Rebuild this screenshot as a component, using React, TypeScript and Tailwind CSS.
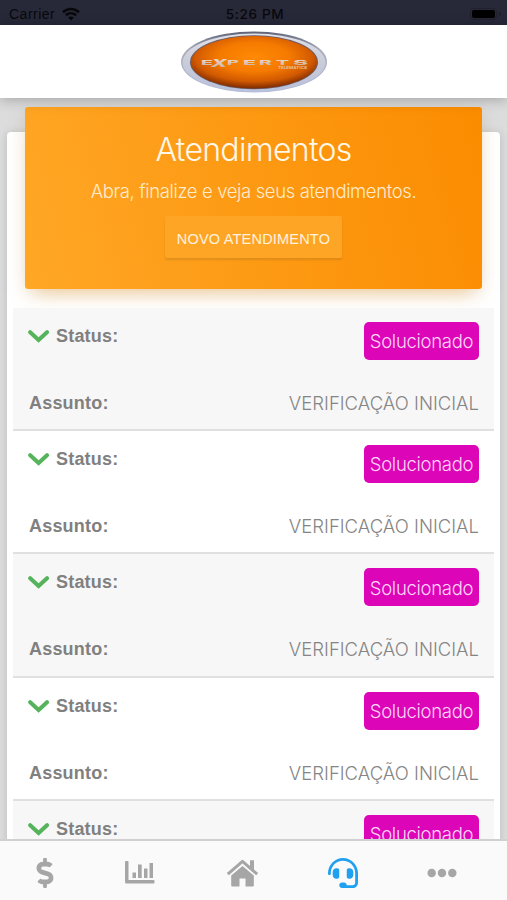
import React from "react";
import { FaDollarSign, FaHeadset, FaEllipsisH } from "react-icons/fa";

function StatusBar() {
  return (
    <div className="flex h-[25px] shrink-0 items-center justify-between bg-[#272838] pl-[9px] pr-[6px] text-[14px] text-[#08080c]">
      <div className="flex w-40 items-center gap-[7px] pt-[3px]">
        <span className="tracking-[0.5px]">Carrier</span>
        <svg width="18" height="14" viewBox="0 0 18 14" fill="none" stroke="#08080c" strokeWidth="2.6">
          <path d="M1 5.3C5.6.8 12.4.8 17 5.3M3.9 8.3c3-2.8 7.2-2.8 10.2 0" />
          <path d="M9 13.5 6.1 10.6c1.8-1.5 4-1.5 5.8 0Z" fill="#08080c" stroke="none" />
        </svg>
      </div>
      <span className="pt-[3px] font-['Inter'] text-[13.5px] font-medium tracking-[0.7px]">5:26 PM</span>
      <div className="flex w-40 items-center justify-end gap-[2px] pt-[2px]">
        <div className="h-[12px] w-[27px] rounded-[4px] border border-[#20202e] p-px">
          <div className="h-full rounded-[2px] bg-black" />
        </div>
        <div className="h-1 w-[2px] rounded-r bg-[#20202e]" />
      </div>
    </div>
  );
}

function Logo() {
  return (
    <svg width="148" height="64" viewBox="0 0 148 64">
      <defs>
        <linearGradient id="rim" x1="0" y1="0" x2="0" y2="1">
          <stop offset="0" stopColor="#5f6377" />
          <stop offset=".3" stopColor="#a8abb9" />
          <stop offset="1" stopColor="#b5bdd8" />
        </linearGradient>
        <linearGradient id="band" x1="0" y1="0" x2="0" y2="1">
          <stop offset="0" stopColor="#dfe1ea" />
          <stop offset=".5" stopColor="#c9ccd9" />
          <stop offset="1" stopColor="#b9c1dc" />
        </linearGradient>
        <radialGradient id="face" cx=".5" cy=".4" r=".62">
          <stop offset="0" stopColor="#ff8a05" />
          <stop offset=".45" stopColor="#f57a00" />
          <stop offset=".75" stopColor="#d25a00" />
          <stop offset="1" stopColor="#722400" />
        </radialGradient>
        <linearGradient id="metal" x1="0" y1="0" x2="0" y2="1">
          <stop offset="0" stopColor="#f0dfd2" />
          <stop offset="1" stopColor="#c8ab98" />
        </linearGradient>
      </defs>
      <ellipse cx="74" cy="32" rx="73" ry="30.5" fill="url(#rim)" />
      <ellipse cx="74" cy="32.5" rx="71.5" ry="29" fill="url(#band)" />
      <ellipse cx="74" cy="32.2" rx="64" ry="27" fill="#6c5b62" />
      <ellipse cx="74" cy="32.2" rx="63" ry="26.2" fill="url(#face)" />
      <g fontFamily="Inter, sans-serif" fontWeight="800" fontSize="6.5" fill="url(#metal)">
        <text x="21" y="34.500" textLength="12" lengthAdjust="spacingAndGlyphs">E</text>
        <text x="31" y="37" fontSize="11" fontStyle="italic" textLength="16" lengthAdjust="spacingAndGlyphs">X</text>
        <text x="47" y="34.500" textLength="12" lengthAdjust="spacingAndGlyphs">P</text>
        <text x="63" y="34.500" textLength="13" lengthAdjust="spacingAndGlyphs">E</text>
        <text x="79" y="34.500" textLength="13" lengthAdjust="spacingAndGlyphs">R</text>
        <text x="96" y="34.500" textLength="13" lengthAdjust="spacingAndGlyphs">T</text>
        <text x="113" y="34.500" textLength="15" lengthAdjust="spacingAndGlyphs">S</text>
      </g>
      <text x="98" y="39" fontSize="4" fontFamily="Inter, sans-serif" fontWeight="700" fill="#e5bf9f" textLength="29" lengthAdjust="spacingAndGlyphs">TELEMATICS</text>
    </svg>
  );
}

function ChartIcon() {
  return (
    <svg width="30" height="23" viewBox="0 0 30 23" fill="currentColor">
      <path d="M0 1Q0 0 1 0h1.500q1 0 1 1v18h25q1 0 1 1v1.500q0 1-1 1H1.500Q0 22.500 0 21Z" />
      <path d="M7.500 11.500H11V17H7.500zM13 3.500h3.700V17H13zM19 7.500h3.500V17H19zM24.500 2H28v15h-3.500z" />
    </svg>
  );
}

function HomeIcon() {
  return (
    <svg width="33" height="28" viewBox="0 0 33 28" fill="currentColor">
      <path d="M16.500 7 27.800 16.500v10q0 1-1 1H19.500v-8h-6v8H6.200q-1 0-1-1v-10Z" />
      <path d="M24 1.500h4V11l-4-3.500Z" />
      <path d="m1.800 15.500 14.700-12.800 14.700 12.800" fill="none" stroke="#fafafa" strokeWidth="5" strokeLinejoin="round" />
      <path d="M24 1.500h4V12l-4-3.500Z" />
      <path d="m1.800 15.200 14.700-12.800 14.700 12.800" fill="none" stroke="currentColor" strokeWidth="3" strokeLinejoin="round" />
    </svg>
  );
}

function Ticket({ shaded }: { shaded: boolean }) {
  return (
    <div className={`h-[123.3px] border-b-2 border-[#e0e0e0] px-[15px] pt-[14px] ${shaded ? "bg-[#f7f7f7]" : "bg-white"}`}>
      <div className="flex items-start justify-between">
        <div className="flex items-center gap-[6px] pt-px">
          <svg width="22" height="14" viewBox="0 0 22 14" fill="none" stroke="#55b35b" strokeWidth="4" strokeLinecap="round" strokeLinejoin="miter">
            <path d="M2.200 3.200 10.600 11 19 3.200" />
          </svg>
          <span className="text-[18px] font-bold leading-[26px] tracking-[0.2px] text-[#808080]">Status:</span>
        </div>
        <span className="flex h-[38px] w-[115px] items-center justify-center rounded-[5px] bg-[#dc05b8] pt-[2px] font-['Inter'] text-[18.5px] font-light tracking-[-0.3px] text-[#ffd5f8]">
          Solucionado
        </span>
      </div>
      <div className="mt-[29px] flex items-center justify-between pl-px leading-[28px]">
        <span className="text-[18px] font-bold tracking-[0.2px] text-[#808080]">Assunto:</span>
        <span className="font-['Inter'] text-[18.5px] font-light text-[#858585]">VERIFICAÇÃO INICIAL</span>
      </div>
    </div>
  );
}

export default function App() {
  return (
    <div className="flex h-[900px] w-[507px] flex-col overflow-hidden bg-[#dcdcdc] font-['Liberation_Sans',sans-serif]">
      <StatusBar />
      <header className="z-10 flex h-[73px] shrink-0 justify-center bg-white pt-[5px] shadow-[0_2px_12px_rgba(0,0,0,0.25)]">
        <Logo />
      </header>
      <main className="min-h-0 flex-1 overflow-hidden px-[7px] pt-[34px]">
        <section className="flex h-[900px] flex-col rounded-[4px] bg-white px-[6px] shadow-[0_1px_8px_rgba(0,0,0,0.14)]">
          <div className="mx-3 -mt-[25px] h-[182px] shrink-0 rounded-[3px] bg-[linear-gradient(75deg,#ffa726,#fb8c00)] text-center font-['Inter'] font-light text-[#fff7e8] shadow-[0_10px_20px_-8px_rgba(230,145,25,0.5),0_4px_16px_rgba(0,0,0,0.06)]">
            <h1 className="pt-[23px] text-[32px] leading-[40px] tracking-[-0.7px]">Atendimentos</h1>
            <p className="mt-[8px] text-[18.5px] leading-[26px] tracking-[-0.37px] text-[#ffebcd]">Abra, finalize e veja seus atendimentos.</p>
            <button className="mt-[12px] h-[42px] w-[177px] rounded-[2px] bg-[#ffa526] pt-[5px] font-['Liberation_Sans'] text-[14.5px] font-normal tracking-[0.2px] text-[#fff3de] shadow-[0_2px_2px_rgba(140,100,40,0.25)]">
              NOVO ATENDIMENTO
            </button>
          </div>
          <div className="mt-[18.8px]">
            {[0, 1, 2, 3, 4].map((row) => (
              <Ticket key={row} shaded={row % 2 === 0} />
            ))}
          </div>
        </section>
      </main>
      <nav className="z-10 flex h-[61px] shrink-0 items-center justify-between border-t-2 border-[#d0d0d0] bg-[#fafafa] pl-[30px] pr-[50px] pt-[4px] text-[#a6a6a6]">
        <FaDollarSign size={30} />
        <div className="-ml-[4px]"><ChartIcon /></div>
        <div className="pl-[2px]"><HomeIcon /></div>
        <FaHeadset size={30} className="text-[#20a0f0]" />
        <FaEllipsisH size={30} />
      </nav>
    </div>
  );
}
